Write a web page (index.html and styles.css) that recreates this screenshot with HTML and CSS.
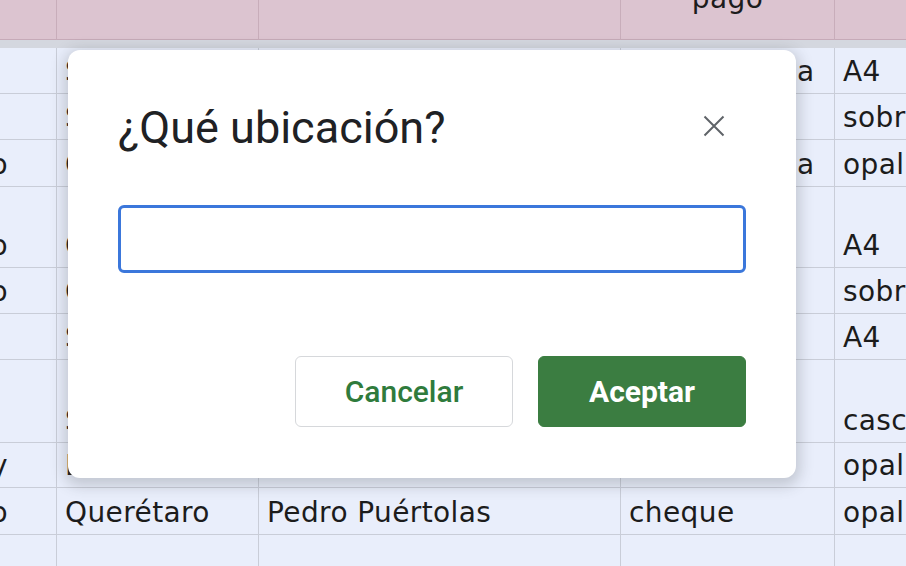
FILE: index.html
```html
<!DOCTYPE html>
<html lang="es">
<head>
<meta charset="utf-8">
<title>¿Qué ubicación?</title>
<link rel="stylesheet" href="styles.css">
</head>
<body>
<div class="sheet">
  <div class="row head">
    <div class="cell"></div>
    <div class="cell"></div>
    <div class="cell"></div>
    <div class="cell hcell"><span class="htext">Forma de<br>pago</span></div>
    <div class="cell"></div>
  </div>
  <div class="freeze"></div>
  <div class="row r46">
    <div class="cell c0"></div>
    <div class="cell">San Luis Potosí</div>
    <div class="cell"></div>
    <div class="cell pay">transferencia</div>
    <div class="cell">A4</div>
  </div>
  <div class="row r46">
    <div class="cell c0"></div>
    <div class="cell">Saltillo</div>
    <div class="cell"></div>
    <div class="cell pay"></div>
    <div class="cell">sobre</div>
  </div>
  <div class="row r47">
    <div class="cell c0">Enviado</div>
    <div class="cell">Cancún</div>
    <div class="cell"></div>
    <div class="cell pay">transferencia</div>
    <div class="cell">opalina</div>
  </div>
  <div class="row r81">
    <div class="cell c0">Pagado</div>
    <div class="cell">Colima</div>
    <div class="cell"></div>
    <div class="cell pay"></div>
    <div class="cell">A4</div>
  </div>
  <div class="row r46">
    <div class="cell c0">Enviado</div>
    <div class="cell">Celaya</div>
    <div class="cell"></div>
    <div class="cell pay"></div>
    <div class="cell">sobre</div>
  </div>
  <div class="row r46">
    <div class="cell c0"></div>
    <div class="cell">Sonora</div>
    <div class="cell"></div>
    <div class="cell pay"></div>
    <div class="cell">A4</div>
  </div>
  <div class="row r83">
    <div class="cell c0"></div>
    <div class="cell">Sinaloa</div>
    <div class="cell"></div>
    <div class="cell pay"></div>
    <div class="cell">cascarón</div>
  </div>
  <div class="row r45">
    <div class="cell c0">Urgente hoy</div>
    <div class="cell">León</div>
    <div class="cell"></div>
    <div class="cell pay"></div>
    <div class="cell">opalina</div>
  </div>
  <div class="row r47">
    <div class="cell c0">Pagado</div>
    <div class="cell">Querétaro</div>
    <div class="cell">Pedro Puértolas</div>
    <div class="cell">cheque</div>
    <div class="cell">opalina</div>
  </div>
  <div class="row r46">
    <div class="cell c0"></div>
    <div class="cell"></div>
    <div class="cell"></div>
    <div class="cell"></div>
    <div class="cell"></div>
  </div>
</div>

<div class="dialog" role="dialog" aria-labelledby="dlg-title">
  <div class="dialog-head">
    <h1 id="dlg-title" class="dialog-title">¿Qué ubicación?</h1>
    <button class="close" aria-label="Cerrar">
      <svg width="22" height="22" viewBox="0 0 22 22"><path d="M1.5 1.5 L20.5 20.5 M20.5 1.5 L1.5 20.5" stroke="#5f6368" stroke-width="2" fill="none"/></svg>
    </button>
  </div>
  <input class="field" type="text" aria-label="Ubicación">
  <div class="actions">
    <button class="btn btn-cancel">Cancelar</button>
    <button class="btn btn-ok">Aceptar</button>
  </div>
</div>
</body>
</html>
```
FILE: styles.css
```css
* { box-sizing: border-box; }

html, body {
  margin: 0;
  width: 906px;
  height: 566px;
  overflow: hidden;
  background: #e9eefb;
}

.sheet {
  width: 906px;
  overflow: hidden;
  font-family: "DejaVu Sans", sans-serif;
  font-size: 28px;
  letter-spacing: 0.4px;
  color: #1c1c1c;
}

.row {
  display: grid;
  grid-template-columns: 57px 202px 362px 214px 200px;
  background: #e9eefb;
}

.cell {
  border-right: 1px solid #c9cdd8;
  border-bottom: 1px solid #c9cdd8;
  overflow: hidden;
  white-space: nowrap;
  display: flex;
  align-items: flex-end;
  padding: 0 0 5px 8px;
  line-height: 32px;
}

.pay {
  letter-spacing: 0;
}

.c0 {
  justify-content: flex-end;
  padding-left: 0;
  padding-right: 48px;
}

.head {
  height: 40px;
  background: #dcc4d0;
}
.head .cell {
  border-right-color: #c8adba;
  border-bottom-color: #c6aab8;
}
.hcell {
  align-items: flex-start;
  justify-content: center;
  padding: 0;
  text-align: center;
}
.htext {
  display: block;
  line-height: 34px;
  margin-top: -52px;
}

.freeze {
  height: 8px;
  background: #d4d7df;
}

.r45 { height: 45px; }
.r46 { height: 46px; }
.r47 { height: 47px; }
.r81 { height: 81px; }
.r83 { height: 83px; }

.dialog {
  position: absolute;
  left: 68px;
  top: 50px;
  width: 728px;
  height: 428px;
  padding: 52px 50px 51px;
  background: #fff;
  border-radius: 12px;
  box-shadow: 0 4px 14px 4px rgba(60, 64, 67, 0.22);
  font-family: Roboto, "Noto Sans", sans-serif;
}

.dialog-head {
  display: flex;
  justify-content: space-between;
  align-items: flex-start;
}

.dialog-title {
  margin: 0;
  font-size: 45px;
  font-weight: 400;
  line-height: 52px;
  color: #202124;
}

.close {
  width: 44px;
  height: 44px;
  margin: 2px 10px 0 0;
  padding: 0;
  border: 0;
  background: transparent;
  display: flex;
  align-items: center;
  justify-content: center;
}

.field {
  display: block;
  width: 100%;
  height: 68px;
  margin-top: 51px;
  border: 3px solid #3b77db;
  border-radius: 6px;
  outline: none;
  background: #fff;
}

.actions {
  display: flex;
  justify-content: flex-end;
  gap: 25px;
  margin-top: 83px;
}

.btn {
  height: 71px;
  border-radius: 6px;
  font-family: Roboto, "Noto Sans", sans-serif;
  font-size: 30px;
  font-weight: 500;
  padding: 0;
}

.btn-cancel {
  width: 218px;
  background: #fff;
  border: 1px solid #d6d8db;
  color: #2f7b3c;
}

.btn-ok {
  width: 208px;
  background: #3b7d41;
  border: 1px solid #3b7d41;
  color: #fff;
  font-weight: 700;
}
```
